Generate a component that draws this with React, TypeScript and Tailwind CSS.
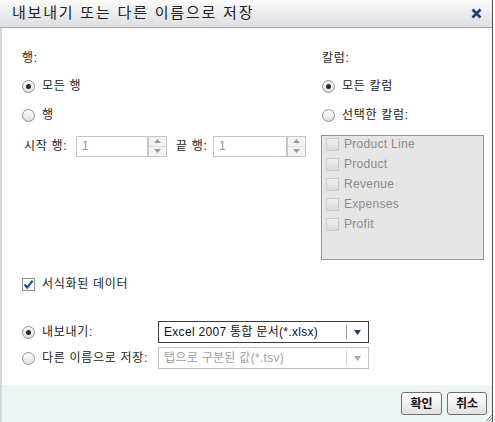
import React from 'react';

const font = "font-['Liberation_Sans','Noto_Sans_CJK_KR',sans-serif]";

function Radio({ checked }: { checked?: boolean }) {
  return (
    <span className="w-[13px] h-[13px] rounded-full border border-[#8e9090] bg-gradient-to-b from-white to-[#dedede] flex items-center justify-center shrink-0">
      {checked && <span className="w-[5px] h-[5px] rounded-full bg-[#2a2a2a]" />}
    </span>
  );
}

function ListCheck() {
  return (
    <span className="w-[13px] h-[13px] border border-[#cacaca] bg-gradient-to-b from-[#f0f0f0] to-[#d9d9d9] shrink-0" />
  );
}

function Spinner() {
  return (
    <div className="w-[19px] h-[21px] border border-[#c3c6d2] bg-[#f3f3f3] flex flex-col">
      <div className="flex-1 flex items-center justify-center border-b border-[#dcdcdc]">
        <svg width="7" height="4" viewBox="0 0 7 4"><path d="M0 4 L3.5 0 L7 4 Z" fill="#9a9a9a" /></svg>
      </div>
      <div className="flex-1 flex items-center justify-center">
        <svg width="7" height="4" viewBox="0 0 7 4"><path d="M0 0 L3.5 4 L7 0 Z" fill="#9a9a9a" /></svg>
      </div>
    </div>
  );
}

function NumInput({ w }: { w: string }) {
  return (
    <div className="flex">
      <div className={`${w} h-[21px] border border-[#c3c6d2] bg-white text-[#999] pl-[5px] flex items-center`}>1</div>
      <Spinner />
    </div>
  );
}

const columns = ['Product Line', 'Product', 'Revenue', 'Expenses', 'Profit'];

export default function App() {
  return (
    <div className={`w-[495px] h-[422px] flex bg-white text-[12px] text-[#222] ${font}`}>
      <div className="w-[492px] flex flex-col">
        {/* title */}
        <div className="h-[28px] border-b border-[#a2a6aa] bg-gradient-to-b from-[#fbfbfb] to-[#dcdee1] flex items-center justify-between pl-[12px] pr-[10px]">
          <span className="text-[15px] tracking-[1.8px] text-[#222]">내보내기 또는 다른 이름으로 저장</span>
          <svg width="11" height="11" viewBox="0 0 11 11">
            <path d="M1.5 1.5 L9.5 9.5 M9.5 1.5 L1.5 9.5" stroke="#1f3d6b" strokeWidth="2.6" />
          </svg>
        </div>

        {/* body */}
        <div className="h-[357px] border-l-2 border-[#cfdada] pl-[20px] pt-[16px] flex flex-col tracking-[0.7px]">
          <div className="flex">
            <div className="w-[300px] flex flex-col">
              <div className="h-[28px] flex items-center">행:</div>
              <div className="h-[28px] flex items-center gap-[7px]"><Radio checked />모든 행</div>
              <div className="h-[30px] flex items-center gap-[7px]"><Radio />행</div>
              <div className="h-[32px] flex items-center pl-[2px]">
                <span className="w-[52px]">시작 행:</span>
                <NumInput w="w-[72px]" />
                <span className="ml-[9px] w-[37px]">끝 행:</span>
                <NumInput w="w-[74px]" />
              </div>
            </div>
            <div className="flex flex-col">
              <div className="h-[28px] flex items-center">칼럼:</div>
              <div className="h-[28px] flex items-center gap-[7px]"><Radio checked />모든 칼럼</div>
              <div className="h-[30px] flex items-center gap-[7px]"><Radio />선택한 칼럼:</div>
              <div className="mt-[5px] -ml-[1px] w-[163px] h-[125px] border border-[#8f949c] bg-[#e6e6e6] flex flex-col pt-[-2px]">
                <div className="-mt-[2px] flex flex-col">
                  {columns.map((c) => (
                    <div key={c} className="h-[20px] flex items-center gap-[5px] pl-[4px] text-[#8a8a8a] tracking-[0.3px]">
                      <ListCheck />
                      {c}
                    </div>
                  ))}
                </div>
              </div>
            </div>
          </div>

          <div className="mt-[12px] h-[24px] flex items-center gap-[7px]">
            <span className="w-[13px] h-[13px] border border-[#8e9090] bg-white flex items-center justify-center">
              <svg width="11" height="11" viewBox="0 0 11 11">
                <path d="M1.5 5.5 L4.3 8.6 L9.6 1.6" stroke="#1f4f8f" strokeWidth="2.2" fill="none" />
              </svg>
            </span>
            서식화된 데이터
          </div>

          <div className="mt-[23px] h-[26px] flex items-center">
            <div className="w-[136px] flex items-center gap-[7px]"><Radio checked />내보내기:</div>
            <div className="w-[211px] h-[22px] border border-[#3a3a3a] bg-white flex items-center">
              <span className="flex-1 pl-[5px] text-[#111] tracking-[0.3px]">Excel 2007 통합 문서(*.xlsx)</span>
              <span className="w-px h-[14px] bg-[#9a9a9a]" />
              <span className="w-[21px] flex items-center justify-center">
                <svg width="7" height="5" viewBox="0 0 7 5"><path d="M0 0 L7 0 L3.5 5 Z" fill="#1f3d6b" /></svg>
              </span>
            </div>
          </div>
          <div className="h-[26px] flex items-center">
            <div className="w-[136px] flex items-center gap-[7px]"><Radio />다른 이름으로 저장:</div>
            <div className="w-[211px] h-[22px] border border-[#c2c2c2] bg-white flex items-center">
              <span className="flex-1 pl-[5px] text-[#a0a0a0] tracking-[0.3px]">탭으로 구분된 값(*.tsv)</span>
              <span className="w-px h-[14px] bg-[#cfcfcf]" />
              <span className="w-[21px] flex items-center justify-center">
                <svg width="7" height="5" viewBox="0 0 7 5"><path d="M0 0 L7 0 L3.5 5 Z" fill="#a8a8a8" /></svg>
              </span>
            </div>
          </div>
        </div>

        {/* footer */}
        <div className="relative flex-1 bg-[#edf5f4] border-l-2 border-[#cfdada] flex items-center justify-end gap-[5px] pr-[5px]">
          <button className="w-[41px] h-[23px] rounded-[3px] border border-[#707070] bg-gradient-to-b from-white to-[#e2e2e2] font-bold text-[12px] text-[#111]">확인</button>
          <button className="w-[40px] h-[23px] rounded-[3px] border border-[#707070] bg-gradient-to-b from-white to-[#e2e2e2] font-bold text-[12px] text-[#111]">취소</button>
          <svg className="absolute right-0 bottom-[1px]" width="6" height="6" viewBox="0 0 6 6">
            <path d="M6 0 L0 6 M6 3 L3 6" stroke="#8a8a8a" strokeWidth="1" />
          </svg>
        </div>
      </div>
      <div className="w-px bg-[#4a4a4a]" />
      <div className="w-[2px] bg-white" />
    </div>
  );
}
